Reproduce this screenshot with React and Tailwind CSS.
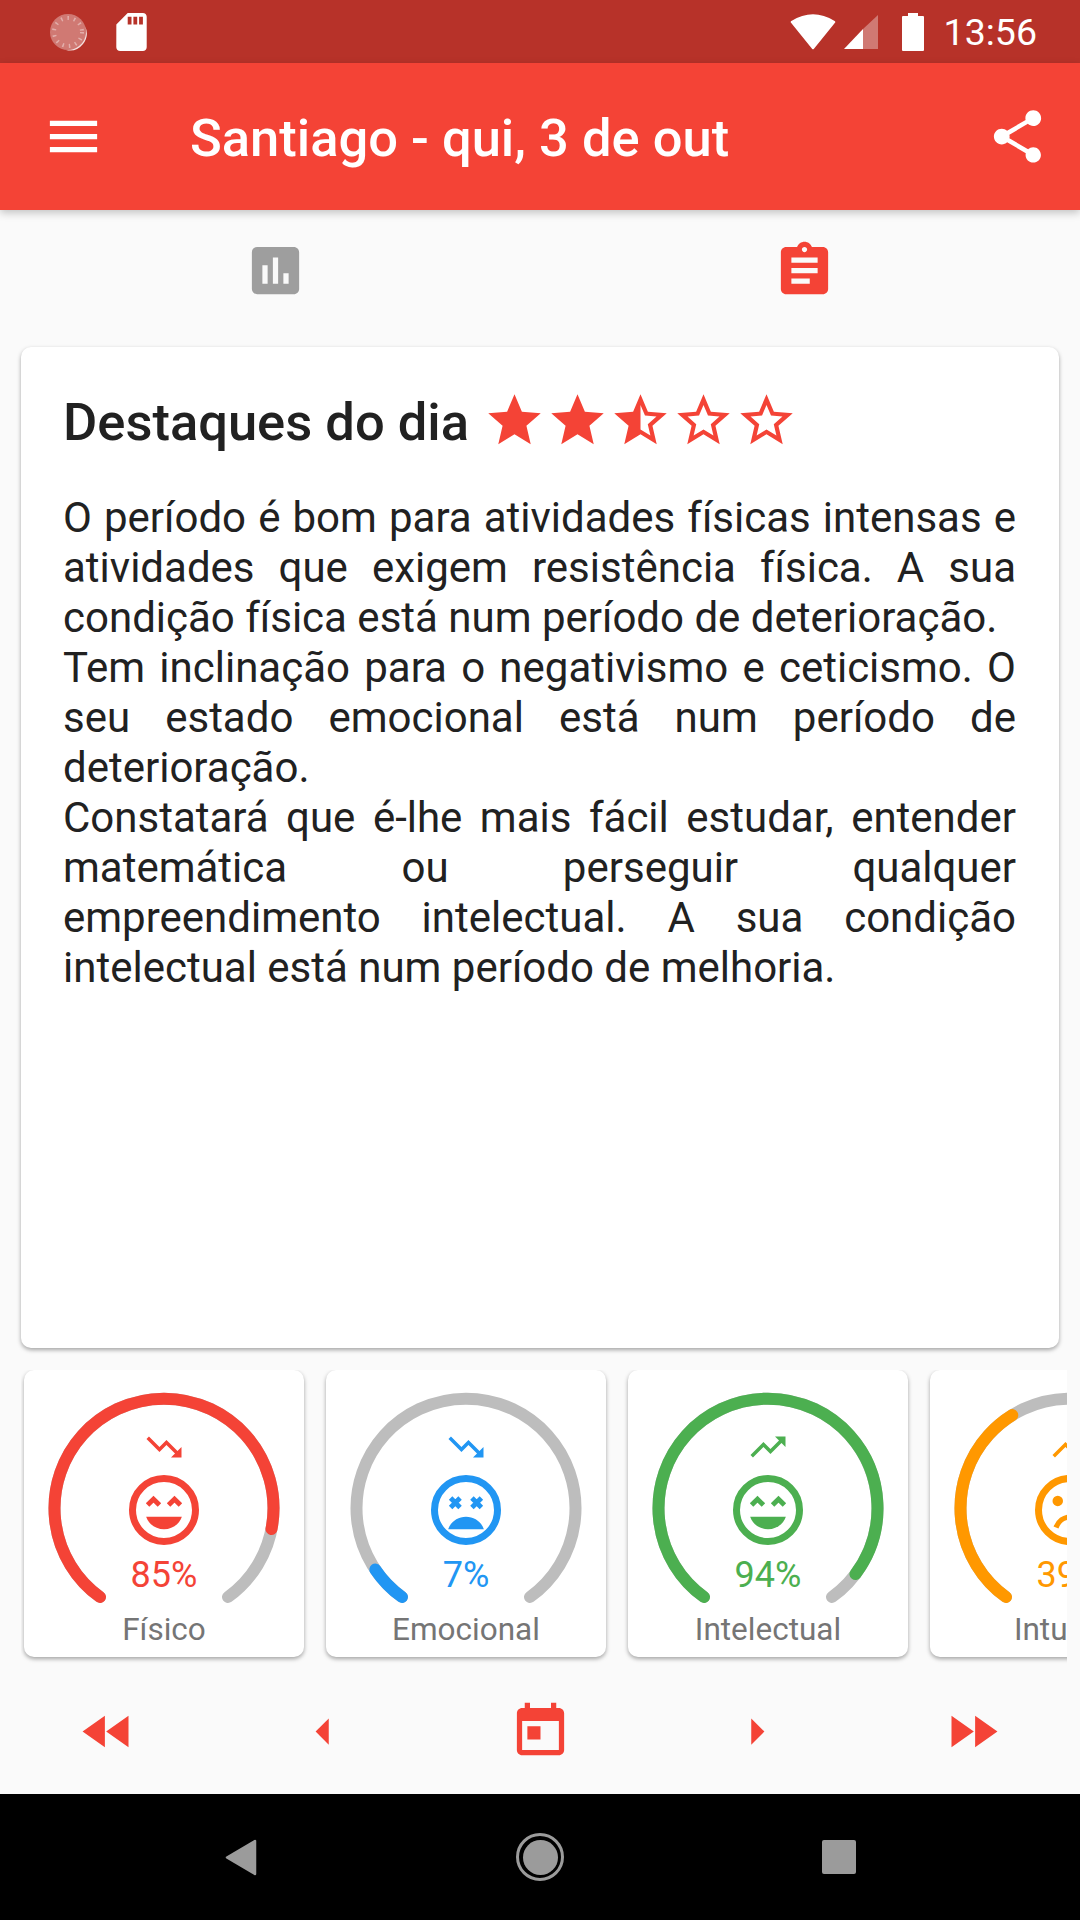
const RED = "#F44336";
const BLUE = "#2196F3";
const GREEN = "#4CAF50";
const ORANGE = "#FF9800";

const icons = {
  menu: "M3 18h18v-2H3v2zm0-5h18v-2H3v2zm0-7v2h18V6H3z",
  share:
    "M18 16.08c-.76 0-1.44.3-1.96.77L8.91 12.7c.05-.23.09-.46.09-.7s-.04-.47-.09-.7l7.05-4.11c.54.5 1.25.81 2.04.81 1.66 0 3-1.34 3-3s-1.34-3-3-3-3 1.34-3 3c0 .24.04.47.09.7L8.04 9.81C7.5 9.31 6.79 9 6 9c-1.66 0-3 1.34-3 3s1.34 3 3 3c.79 0 1.5-.31 2.04-.81l7.12 4.16c-.05.21-.08.43-.08.65 0 1.61 1.31 2.92 2.92 2.92 1.61 0 2.92-1.31 2.92-2.92s-1.31-2.92-2.92-2.92z",
  assessment:
    "M19 3H5c-1.1 0-2 .9-2 2v14c0 1.1.9 2 2 2h14c1.1 0 2-.9 2-2V5c0-1.1-.9-2-2-2zM9 17H7v-7h2v7zm4 0h-2V7h2v10zm4 0h-2v-4h2v4z",
  assignment:
    "M19 3h-4.18C14.4 1.84 13.3 1 12 1c-1.3 0-2.4.84-2.82 2H5c-1.1 0-2 .9-2 2v14c0 1.1.9 2 2 2h14c1.1 0 2-.9 2-2V5c0-1.1-.9-2-2-2zm-7 0c.55 0 1 .45 1 1s-.45 1-1 1-1-.45-1-1 .45-1 1-1zm2 14H7v-2h7v2zm3-4H7v-2h10v2zm0-4H7V7h10v2z",
  star: "M12 17.27L18.18 21l-1.64-6.97L22 9.24l-7.19-.61L12 2 9.19 8.63 2 9.24l5.46 4.79L5.82 21z",
  starBorder:
    "M22 9.24l-7.19-.62L12 2 9.19 8.63 2 9.24l5.46 4.73L5.82 21 12 17.27 18.18 21l-1.63-7.03L22 9.24zM12 15.4l-3.76 2.27 1-4.28-3.32-2.88 4.38-.38L12 6.1l1.71 4.04 4.38.38-3.32 2.88 1 4.28L12 15.4z",
  starHalf:
    "M22 9.24l-7.19-.62L12 2 9.19 8.63 2 9.24l5.46 4.73L5.82 21 12 17.27 18.18 21l-1.63-7.03L22 9.24zM12 15.4V6.1l1.71 4.04 4.38.38-3.32 2.88 1 4.28L12 15.4z",
  rewind: "M11 18V6l-8.5 6 8.5 6zm.5-6l8.5 6V6l-8.5 6z",
  forward: "M4 18l8.5-6L4 6v12zm9-12v12l8.5-6L13 6z",
  left: "M14 7l-5 5 5 5V7z",
  right: "M10 17l5-5-5-5v10z",
  today:
    "M19 3h-1V1h-2v2H8V1H6v2H5c-1.11 0-1.99.9-1.99 2L3 19c0 1.1.89 2 2 2h14c1.1 0 2-.9 2-2V5c0-1.1-.9-2-2-2zm0 16H5V8h14v11zM7 10h5v5H7z",
  down: "M16 18l2.29-2.29-4.88-4.88-4 4L2 7.41 3.41 6l6 6 4-4 6.3 6.29L22 12v6z",
  up: "M16 6l2.29 2.29-4.88 4.88-4-4L2 16.59 3.41 18l6-6 4 4 6.3-6.29L22 12V6z",
  sd: "M18 2h-8L4.02 8 4 20c0 1.1.9 2 2 2h12c1.1 0 2-.9 2-2V4c0-1.1-.9-2-2-2zm-6 6h-2V4h2v4zm3 0h-2V4h2v4zm3 0h-2V4h2v4z",
};

function Icon({ d, size = 63, color = "#fff", className = "" }) {
  return (
    <svg width={size} height={size} viewBox="0 0 24 24" fill={color} className={`shrink-0 ${className}`}>
      <path d={d} />
    </svg>
  );
}

function Face({ kind, color }) {
  return (
    <svg width="84" height="84" viewBox="0 0 24 24" className="shrink-0">
      <circle cx="12" cy="12" r="9" fill="none" stroke={color} strokeWidth="2" />
      {kind === "happy" && (
        <g>
          <path d="M7.3 10.6l1.7-1.7 1.7 1.7M13.3 10.6l1.7-1.7 1.7 1.7" fill="none" stroke={color} strokeWidth="1.4" />
          <path d="M6.9 13.9h10.2c-.7 2.1-2.7 3.6-5.1 3.6s-4.4-1.5-5.1-3.6z" fill={color} />
        </g>
      )}
      {kind === "dizzy" && (
        <g>
          <path d="M7.6 8.6l2.7 2.7M10.3 8.6l-2.7 2.7M13.7 8.6l2.7 2.7M16.4 8.6l-2.7 2.7" fill="none" stroke={color} strokeWidth="1.4" />
          <path d="M6.9 17.5c.7-2.1 2.7-3.6 5.1-3.6s4.4 1.5 5.1 3.6z" fill={color} />
        </g>
      )}
      {kind === "sad" && (
        <g>
          <circle cx="8.5" cy="9.4" r="1.5" fill={color} />
          <circle cx="15.5" cy="9.4" r="1.5" fill={color} />
          <path d="M8 17c.7-1.8 2.2-3 4-3s3.3 1.2 4 3" fill="none" stroke={color} strokeWidth="1.5" />
        </g>
      )}
    </svg>
  );
}

// ring is 288deg, open at the bottom
const ARC = "M76 227 A109.5 109.5 0 1 1 204 227";

function GaugeCard({ label, value, fill, color, trend, face }) {
  return (
    <div className="relative w-[280px] h-[287px] shrink-0 bg-white rounded-[10px] shadow-[0_2px_4px_rgba(0,0,0,0.35)] flex flex-col items-center">
      <svg width="280" height="287" className="absolute inset-0" fill="none" strokeWidth="12" strokeLinecap="round">
        <path d={ARC} stroke="#BDBDBD" />
        <path d={ARC} stroke={color} pathLength="100" strokeDasharray={`${fill} 200`} />
      </svg>
      <div className="relative flex flex-col items-center pt-[56px]">
        <Icon d={trend} size={42} color={color} />
        <Face kind={face} color={color} />
        <div className="mt-[2px] h-[42px] leading-[42px] text-[36px]" style={{ color }}>
          {value}
        </div>
        <div className="mt-[14px] leading-[40px] text-[31.5px] text-[#757575]">{label}</div>
      </div>
    </div>
  );
}

function StatusBar() {
  return (
    <div className="h-[63px] shrink-0 bg-[#B73229] flex items-center justify-between pl-[50px] pr-[43px]">
      <div className="flex items-center gap-[29px]">
        <svg width="37" height="38" viewBox="0 0 37 38">
          <circle cx="18" cy="19" r="18" fill="#fff" fillOpacity="0.35" />
          <path d="M29 33a18 18 0 0 0 6-20a17 17 0 0 1-19 24a18 18 0 0 0 13-4z" fill="#fff" fillOpacity="0.85" />
          <circle cx="18" cy="19" r="14" fill="none" stroke="#fff" strokeOpacity="0.4" strokeWidth="4" strokeDasharray="1.5 5" />
        </svg>
        <svg width="31" height="38" viewBox="4 2 16 20" fill="#fff">
          <path d={icons.sd} />
        </svg>
      </div>
      <div className="flex items-center text-white">
        <svg width="46" height="37" viewBox="0 0 46 37">
          <path d="M2 9Q23 -4 44 9L23 35z" fill="#fff" stroke="#fff" strokeWidth="2.5" strokeLinejoin="round" />
        </svg>
        <svg width="36" height="36" viewBox="0 0 36 36" className="ml-[7px]">
          <path d="M1 35L20 15V35z" fill="#fff" />
          <path d="M20 15L35 1V35H20z" fill="#fff" fillOpacity="0.35" />
        </svg>
        <svg width="22" height="38" viewBox="0 0 22 38" className="ml-[23px]">
          <path d="M6 0h10v3h5a1 1 0 0 1 1 1v33a1 1 0 0 1-1 1H1a1 1 0 0 1-1-1V4a1 1 0 0 1 1-1h5z" fill="#fff" />
        </svg>
        <span className="ml-[20px] pt-[3px] text-[37.5px] leading-none">13:56</span>
      </div>
    </div>
  );
}

export default function App() {
  return (
    <div className="w-[1080px] h-[1920px] flex flex-col bg-[#FAFAFA] overflow-hidden font-[family-name:Roboto,sans-serif]">
      <StatusBar />

      {/* APP BAR */}
      <div className="relative h-[147px] shrink-0 flex items-center pl-[42px] pr-[31px] shadow-[0_3px_8px_rgba(0,0,0,0.22)] bg-[#F44336]">
        <Icon d={icons.menu} />
        <div className="ml-[85px] pt-[4px] flex-1 text-white font-medium text-[52.5px] leading-none">Santiago - qui, 3 de out</div>
        <Icon d={icons.share} />
      </div>

      {/* TABS */}
      <div className="h-[137px] shrink-0 grid grid-cols-2 px-[11px] pt-[29px]">
        <div className="flex justify-center">
          <Icon d={icons.assessment} color="#9E9E9E" />
        </div>
        <div className="flex justify-center">
          <Icon d={icons.assignment} color={RED} />
        </div>
      </div>

      {/* HIGHLIGHTS */}
      <div className="mx-[21px] h-[1001px] shrink-0 bg-white rounded-[10px] shadow-[0_2px_4px_rgba(0,0,0,0.35)] pl-[42px] pr-[43px] pt-[42px]">
        <div className="flex items-center">
          <div className="pt-[4px] font-medium text-[52.5px] leading-none text-[#212121] mr-[14px]">Destaques do dia</div>
          <Icon d={icons.star} color={RED} />
          <Icon d={icons.star} color={RED} />
          <Icon d={icons.starHalf} color={RED} />
          <Icon d={icons.starBorder} color={RED} />
          <Icon d={icons.starBorder} color={RED} />
        </div>
        <div className="mt-[41px] text-[42px] leading-[50px] text-[#212121] text-justify">
          <p>O período é bom para atividades físicas intensas e atividades que exigem resistência física. A sua condição física está num período de deterioração.</p>
          <p>Tem inclinação para o negativismo e ceticismo. O seu estado emocional está num período de deterioração.</p>
          <p>Constatará que é-lhe mais fácil estudar, entender matemática ou perseguir qualquer empreendimento intelectual. A sua condição intelectual está num período de melhoria.</p>
        </div>
      </div>

      {/* GAUGES */}
      <div className="mt-[22px] ml-[21px] w-[1046px] h-[295px] shrink-0 flex gap-[22px] pl-[3px] overflow-hidden">
        <GaugeCard label="Físico" value="85%" fill={85} color={RED} trend={icons.down} face="happy" />
        <GaugeCard label="Emocional" value="7%" fill={7} color={BLUE} trend={icons.down} face="dizzy" />
        <GaugeCard label="Intelectual" value="94%" fill={94} color={GREEN} trend={icons.up} face="happy" />
        <GaugeCard label="Intuitivo" value="39%" fill={39} color={ORANGE} trend={icons.up} face="sad" />
      </div>

      {/* DATE NAV */}
      <div className="h-[129px] shrink-0 flex items-start justify-between px-[76px] pt-[35px]">
        <Icon d={icons.rewind} color={RED} />
        <Icon d={icons.left} color={RED} />
        <Icon d={icons.today} color={RED} />
        <Icon d={icons.right} color={RED} />
        <Icon d={icons.forward} color={RED} />
      </div>

      {/* ANDROID NAV */}
      <div className="relative flex-1 bg-black flex items-center">
        <div className="w-[1080px] flex items-center">
          <svg width="32" height="37" viewBox="0 0 32 37" className="ml-[225px]">
            <path d="M30 2V35L2 18.5z" fill="#9B9B9B" stroke="#9B9B9B" strokeWidth="2.5" strokeLinejoin="round" />
          </svg>
          <div className="ml-[259px] w-[48px] h-[48px] rounded-full border-[3px] border-[#9B9B9B] flex items-center justify-center">
            <div className="w-[35px] h-[35px] rounded-full bg-[#9B9B9B]" />
          </div>
          <div className="ml-[258px] w-[34px] h-[34px] rounded-[2px] bg-[#9B9B9B]" />
        </div>
      </div>
    </div>
  );
}
